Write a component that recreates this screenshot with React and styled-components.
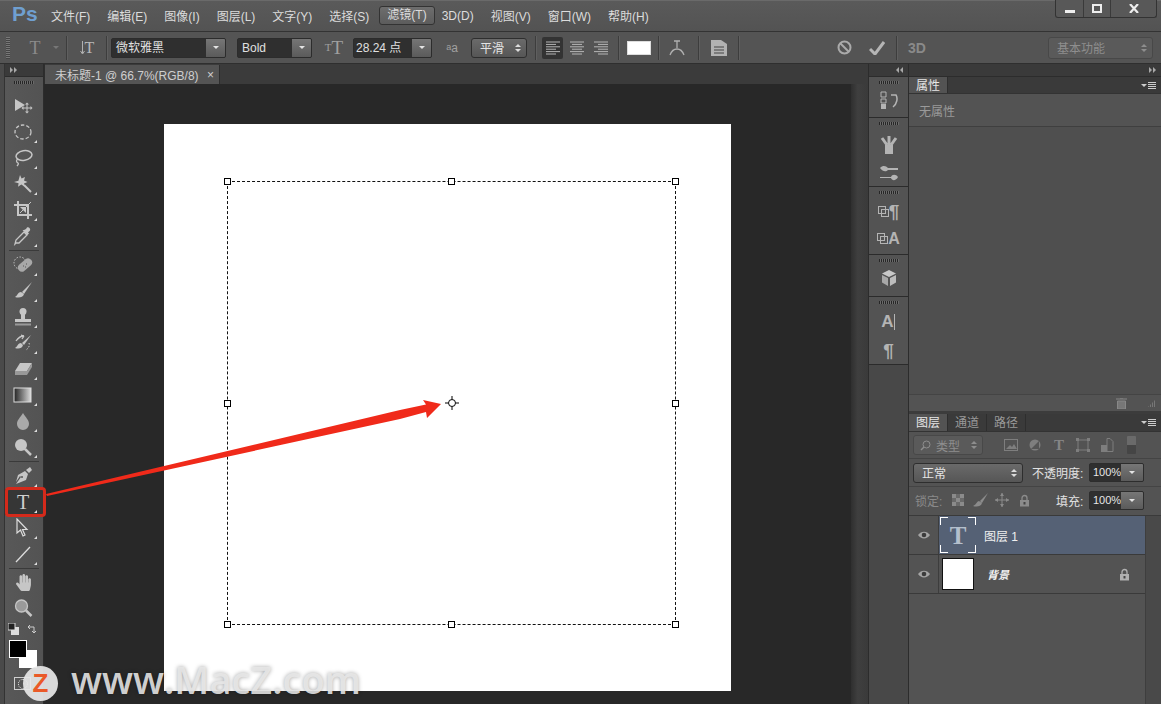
import React from 'react';
import styled, { createGlobalStyle } from 'styled-components';
import { FaHandPaper } from 'react-icons/fa';

const CN = `"Liberation Sans", "Noto Sans CJK SC", sans-serif`;

const GlobalStyle = createGlobalStyle`
  html, body { margin: 0; padding: 0; background: #535353; overflow: hidden; }
  body { font-family: ${CN}; font-size: 12px; color: #d0d0d0; }
  * { box-sizing: border-box; }
`;

const Root = styled.div`
  position: relative;
  width: 1161px;
  height: 704px;
  overflow: hidden;
  display: flex;
  flex-direction: column;
  background: #535353;
`;

/* menu bar */
const MenuBar = styled.div`
  height: 31px;
  display: flex;
  align-items: flex-start;
  padding-left: 12px;
  background: linear-gradient(#5a5a5a, #535353);
  border-top: 1px solid #6a6a6a;
`;

const Logo = styled.div`
  width: 39px;
  margin-top: 1px;
  font: bold 21px/24px "Liberation Sans", sans-serif;
  color: #6f9fd0;
`;

const Menu = styled.div`
  display: flex;
  gap: 17px;
  height: 29px;
  align-items: center;
`;

const MenuItem = styled.div`
  color: #dcdcdc;
  font-size: 12px;
  white-space: nowrap;
  ${p => p.$on && `
    margin: 0 -10px 0 -7px;
    padding: 0 7px;
    height: 19px;
    line-height: 17px;
    border: 1px solid #333;
    border-radius: 3px;
    background: linear-gradient(#6e6e6e, #5c5c5c);
  `}
`;

const WindowButtons = styled.div`
  margin-left: auto;
  margin-right: 4px;
  margin-top: -1px;
  width: 102px;
  height: 18px;
  display: grid;
  grid-template-columns: 27px 27px 1fr;
  border: 1px solid #333;
  border-top: 0;
  border-radius: 0 0 3px 3px;
  background: #585858;
`;

const WindowButton = styled.div`
  display: flex;
  align-items: center;
  justify-content: center;
  & + & { border-left: 1px solid #3a3a3a; }
`;

/* options bar */
const OptionsBar = styled.div`
  height: 33px;
  display: flex;
  align-items: center;
  background: #545454;
  border-top: 1px solid #333;
  border-bottom: 1px solid #2f2f2f;
`;

const Grip = styled.div`
  width: 4px;
  height: 22px;
  margin-left: 6px;
  background: repeating-linear-gradient(#777 0 1px, #444 1px 2px);
`;

const Sep = styled.div`
  width: 1px;
  height: 24px;
  margin-left: ${p => p.$ml || 0}px;
  background: #3d3d3d;
  box-shadow: 1px 0 0 #5f5f5f;
`;

const OptIcon = styled.div`
  display: flex;
  align-items: center;
  justify-content: center;
  width: ${p => p.$w || 20}px;
  height: 22px;
  margin-left: ${p => p.$ml || 0}px;
  font-family: "Liberation Serif", serif;
  color: #8d8d8d;
  background: ${p => (p.$on ? '#333' : 'transparent')};
  border-radius: 2px;
`;

const SerifT = styled.span`
  font: ${p => (p.$bold ? 'bold ' : '')}${p => p.$size || 18}px/1 "Liberation Serif", serif;
  color: ${p => p.$color || '#8a8a8a'};
`;

const Select = styled.div`
  display: flex;
  width: ${p => p.$w}px;
  height: 20px;
  margin-left: ${p => p.$ml || 0}px;
  border: 1px solid #2c2c2c;
  border-radius: 2px;
  background: #2f2f2f;
  overflow: hidden;
`;

const SelectText = styled.div`
  flex: 1;
  padding-left: ${p => p.$pad || 4}px;
  line-height: 18px;
  font-size: 12px;
  color: #e0e0e0;
  white-space: nowrap;
`;

const CaretBox = styled.div`
  width: ${p => p.$w || 19}px;
  display: flex;
  align-items: center;
  justify-content: center;
  background: linear-gradient(#767676, #5b5b5b);
  &::after {
    content: '';
    border-left: 3px solid transparent;
    border-right: 3px solid transparent;
    border-top: 3px solid #e4e4e4;
  }
`;

const Spinner = styled.div`
  display: flex;
  align-items: center;
  gap: 5px;
  width: ${p => p.$w}px;
  height: ${p => p.$h || 20}px;
  margin-left: ${p => p.$ml || 0}px;
  padding: 0 5px 0 ${p => p.$pad || 8}px;
  border: 1px solid ${p => (p.$dim ? '#484848' : '#2e2e2e')};
  border-radius: 3px;
  background: ${p => (p.$dim ? '#5a5a5a' : 'linear-gradient(#6a6a6a, #565656)')};
  color: ${p => (p.$dim ? '#8e8e8e' : '#e4e4e4')};
  font-size: 12px;
`;

const Arrows = styled.span`
  margin-left: auto;
  display: flex;
  flex-direction: column;
  gap: 2px;
  &::before, &::after {
    content: '';
    border-left: 3px solid transparent;
    border-right: 3px solid transparent;
  }
  &::before { border-bottom: 3px solid ${p => p.$c || '#ddd'}; }
  &::after { border-top: 3px solid ${p => p.$c || '#ddd'}; }
`;

const ColorChip = styled.div`
  width: 24px;
  height: 14px;
  margin-left: 8px;
  background: #fff;
  border: 1px solid #ddd;
`;

const Push = styled.div`
  margin-left: auto;
  margin-right: 8px;
`;

/* main */
const Main = styled.div`
  flex: 1;
  display: flex;
  min-height: 0;
`;

const Toolbar = styled.div`
  width: 44px;
  display: flex;
  flex-direction: column;
  background: #4a4a4a;
  padding-left: 4px;
  border-right: 1px solid #2c2c2c;
`;

const ToolColumn = styled.div`
  flex: 1;
  display: flex;
  flex-direction: column;
  background: linear-gradient(90deg, #585858, #535353);
  border-left: 1px solid #333;
`;

const CollapseBar = styled.div`
  height: 13px;
  display: flex;
  align-items: center;
  justify-content: ${p => p.$justify || 'flex-start'};
  padding: 0 5px;
  gap: 1px;
  background: #3a3a3a;
  border-bottom: 1px solid #2c2c2c;
`;

const DblArrow = styled.span`
  display: inline-block;
  width: 0;
  height: 0;
  border-top: 3px solid transparent;
  border-bottom: 3px solid transparent;
  ${p => (p.$left ? 'border-right: 3px solid #a8a8a8;' : 'border-left: 3px solid #a8a8a8;')}
`;

const GripRow = styled.div`
  height: ${p => p.$h || 16}px;
  display: flex;
  justify-content: center;
  padding-top: 4px;
  &::before {
    content: '';
    width: 20px;
    height: 3px;
    background: repeating-linear-gradient(90deg, #262626 0 1px, #6a6a6a 1px 2px);
  }
`;

const Tool = styled.div`
  position: relative;
  height: 26px;
  display: flex;
  align-items: center;
  justify-content: center;
  padding-right: 2px;
  background: ${p => (p.$on ? '#363636' : 'transparent')};
  &::after {
    content: '';
    display: ${p => (p.$corner ? 'block' : 'none')};
    position: absolute;
    right: 6px;
    bottom: 2px;
    border-left: 3px solid transparent;
    border-bottom: 3px solid #ddd;
  }
`;

const Divider = styled.div`
  height: ${p => (p.$thin ? 1 : 2)}px;
  margin: 1px 4px 0;
  border-top: 1px solid #3a3a3a;
`;

const ColorTools = styled.div`
  position: relative;
  flex: 1;
`;

const MiniRow = styled.div`
  display: flex;
  justify-content: space-between;
  padding: 2px 6px 0 3px;
`;

const Swatches = styled.div`
  position: relative;
  margin: 5px 0 0 4px;
  width: 28px;
  height: 30px;
`;

const Swatch = styled.div`
  position: absolute;
  left: ${p => p.$x}px;
  top: ${p => p.$y}px;
  width: 18px;
  height: 18px;
  background: ${p => p.$c};
  border: 1px solid #fff;
`;

const QuickMask = styled.div`
  margin: 7px 0 0 9px;
  width: 17px;
  height: 13px;
  border: 1px solid #cfcfcf;
  background: #555;
  display: flex;
  align-items: center;
  justify-content: center;
  &::after {
    content: '';
    width: 8px;
    height: 8px;
    border-radius: 50%;
    border: 1px dotted #eee;
  }
`;

/* document */
const DocArea = styled.div`
  width: 824px;
  display: flex;
  flex-direction: column;
`;

const TabStrip = styled.div`
  height: 20px;
  background: #3b3b3b;
  padding-top: 1px;
  border-left: 1px solid #2e2e2e;
`;

const DocTab = styled.div`
  width: 175px;
  height: 19px;
  display: flex;
  align-items: center;
  justify-content: space-between;
  padding: 0 5px 0 10px;
  background: #545454;
  color: #cfcfcf;
  font-size: 12px;
  border-right: 1px solid #2e2e2e;
`;

const Workspace = styled.div`
  flex: 1;
  display: flex;
  min-height: 0;
`;

const Pasteboard = styled.div`
  flex: 1;
  background: #282828;
  padding: 40px 0 0 120px;
`;

const VScroll = styled.div`
  width: 17px;
  background: linear-gradient(90deg, #2f2f2f, #3f3f3f 40%, #3a3a3a);
`;

const Canvas = styled.div`
  width: 567px;
  height: 567px;
  background: #fff;
  padding: 57px 0 0 63px;
`;

const TextBox = styled.div`
  position: relative;
  width: 449px;
  height: 444px;
  border: 1px dashed #111;
`;

const Handle = styled.div`
  position: absolute;
  left: calc(${p => p.$x}% + ${p => p.$x / 100}px);
  top: calc(${p => p.$y}% + ${p => p.$y / 100}px);
  width: 7px;
  height: 7px;
  margin: -4px 0 0 -4px;
  background: #fff;
  border: 1px solid #000;
`;

const Crosshair = styled.svg`
  position: absolute;
  left: 50%;
  top: 50%;
  margin: -7px 0 0 -7px;
`;

/* dock */
const Dock = styled.div`
  width: 41px;
  display: flex;
  flex-direction: column;
  background: #484848;
  border-left: 1px solid #2c2c2c;
  border-right: 1px solid #2c2c2c;
`;

const DockGroup = styled.div`
  height: ${p => p.$h}px;
  background: #535353;
  border-bottom: 1px solid #2b2b2b;
`;

const DockIcon = styled.div`
  height: ${p => p.$h || 27}px;
  display: flex;
  align-items: center;
  justify-content: center;
  color: #b4b4b4;
`;

const GlyphA = styled.span`
  font: ${p => (p.$light ? '' : 'bold ')}${p => p.$size || 15}px/1 "Liberation Sans", sans-serif;
  color: ${p => p.$color || '#b4b4b4'};
`;

/* panels */
const Panels = styled.div`
  flex: 1;
  display: flex;
  flex-direction: column;
  background: #3c3c3c;
`;

const PanelTabs = styled.div`
  height: ${p => p.$h || 17}px;
  display: flex;
  background: #3a3a3a;
  padding-left: ${p => p.$pad || 0}px;
  position: relative;
  border-bottom: 1px solid #333;
`;

const PanelTab = styled.div`
  width: ${p => p.$w || 39}px;
  text-align: center;
  line-height: 18px;
  font-size: 12px;
  color: ${p => (p.$on ? '#e6e6e6' : '#999')};
  background: ${p => (p.$on ? '#535353' : 'transparent')};
  border-right: 1px solid #2e2e2e;
`;

const PanelMenu = styled.div`
  margin-left: auto;
  margin-right: 5px;
  display: flex;
  align-items: center;
  gap: 1px;
  &::before {
    content: '';
    border-left: 3px solid transparent;
    border-right: 3px solid transparent;
    border-top: 3px solid #ccc;
  }
  &::after {
    content: '';
    width: 8px;
    height: 7px;
    background: repeating-linear-gradient(#ccc 0 1px, transparent 1px 2px);
  }
`;

const PropsPanel = styled.div`
  height: 334px;
  display: flex;
  flex-direction: column;
  background: #4f4f4f;
`;

const PropsHead = styled.div`
  height: 33px;
  padding: 8px 0 0 10px;
  background: #535353;
  color: #9a9a9a;
  font-size: 12px;
  border-bottom: 1px solid #3f3f3f;
`;

const PropsBody = styled.div`
  flex: 1;
`;

const PropsFooter = styled.div`
  height: 17px;
  display: flex;
  align-items: center;
  justify-content: flex-end;
  gap: 21px;
  padding-right: 5px;
  background: #535353;
  border-top: 1px solid #444;
`;

const ResizeGrip = styled.div`
  width: 8px;
  height: 8px;
  background: repeating-linear-gradient(90deg, #777 0 1px, transparent 1px 2px);
  clip-path: polygon(100% 0, 100% 100%, 0 100%);
`;

const LayersPanel = styled.div`
  margin-top: 3px;
  flex: 1;
  display: flex;
  flex-direction: column;
  background: #535353;
`;

const FilterRow = styled.div`
  height: 27px;
  display: flex;
  align-items: center;
  padding-left: 4px;
  border-bottom: 1px solid #444;
`;

const FilterIcons = styled.div`
  display: flex;
  margin-left: 16px;
`;

const IconCell = styled.div`
  width: ${p => p.$w || 24}px;
  display: flex;
  align-items: center;
  justify-content: center;
`;

const Toggle = styled.div`
  margin-left: 8px;
  width: 9px;
  height: 18px;
  border-radius: 1px;
  background: linear-gradient(#6a6a6a 50%, #454545 50%);
`;

const BlendRow = styled.div`
  height: 28px;
  display: flex;
  align-items: center;
  padding-left: 4px;
  border-bottom: 1px solid #444;
`;

const LockRow = styled.div`
  height: 29px;
  display: flex;
  align-items: center;
  padding: 0 0 2px 6px;
  border-bottom: 1px solid #3a3a3a;
`;

const FieldLabel = styled.div`
  width: ${p => p.$w}px;
  margin-left: ${p => p.$ml || 0}px;
  font-size: 12px;
  white-space: nowrap;
  color: ${p => (p.$dim ? '#8a8a8a' : '#e2e2e2')};
`;

const LockIcons = styled.div`
  display: flex;
`;

const Percent = styled.div`
  display: flex;
  width: 55px;
  height: 19px;
  margin-left: ${p => p.$ml || 0}px;
  border: 1px solid #2d2d2d;
  border-radius: 2px;
  background: #2f2f2f;
  overflow: hidden;
`;

const PercentText = styled.div`
  flex: 1;
  padding-left: 3px;
  line-height: 17px;
  font-size: 11px;
  color: #e6e6e6;
`;

const LayerArea = styled.div`
  flex: 1;
  display: flex;
`;

const LayerList = styled.div`
  flex: 1;
`;

const LayerScroll = styled.div`
  width: 16px;
  background: #494949;
  border-left: 1px solid #3e3e3e;
`;

const Layer = styled.div`
  height: 39px;
  display: flex;
  align-items: center;
  background: ${p => (p.$on ? '#556175' : 'transparent')};
  border-bottom: 1px solid #3a3a3a;
`;

const EyeCell = styled.div`
  width: 30px;
  height: 100%;
  display: flex;
  align-items: center;
  justify-content: center;
  background: #535353;
  border-right: 1px solid #3d3d3d;
`;

const TypeThumb = styled.div`
  position: relative;
  width: 36px;
  height: 36px;
  margin-left: 1px;
  display: flex;
  align-items: center;
  justify-content: center;
  background:
    linear-gradient(#fff, #fff) 0 0 / 8px 1px no-repeat,
    linear-gradient(#fff, #fff) 0 0 / 1px 8px no-repeat,
    linear-gradient(#fff, #fff) 100% 0 / 8px 1px no-repeat,
    linear-gradient(#fff, #fff) 100% 0 / 1px 8px no-repeat,
    linear-gradient(#fff, #fff) 0 100% / 8px 1px no-repeat,
    linear-gradient(#fff, #fff) 0 100% / 1px 8px no-repeat,
    linear-gradient(#fff, #fff) 100% 100% / 8px 1px no-repeat,
    linear-gradient(#fff, #fff) 100% 100% / 1px 8px no-repeat;
`;

const WhiteThumb = styled.div`
  width: 32px;
  height: 32px;
  margin-left: 3px;
  background: #fff;
  border: 1px solid #111;
`;

const LayerName = styled.div`
  margin-left: ${p => p.$ml}px;
  font-size: ${p => (p.$italic ? 11 : 12)}px;
  color: #f0f0f0;
  font-style: ${p => (p.$italic ? 'italic' : 'normal')};
  font-weight: ${p => (p.$italic ? 'bold' : 'normal')};
`;

const LayerLock = styled.div`
  margin-left: auto;
  margin-right: 15px;
  display: flex;
`;

/* things lying over the page */
const ArrowOverlay = styled.svg`
  position: absolute;
  left: 0;
  top: 0;
  pointer-events: none;
`;

const RedFrame = styled.div`
  position: absolute;
  left: 5px;
  top: 487px;
  width: 41px;
  height: 30px;
  border: 3px solid #d42a1b;
  border-radius: 4px;
`;

const Watermark = styled.div`
  position: absolute;
  left: 23px;
  top: 655px;
  display: flex;
  align-items: center;
  gap: 13px;
`;

const ZBadge = styled.div`
  width: 35px;
  height: 35px;
  margin-top: 9px;
  border-radius: 50%;
  background: rgba(232, 232, 232, 0.92);
  text-align: center;
  font: bold 26px/35px "Liberation Sans", sans-serif;
  color: #ea5a28;
`;

const MarkText = styled.div`
  font: 600 38px/48px "Open Sans", sans-serif;
  color: rgba(232, 232, 232, 0.9);
  text-shadow: 0 0 4px rgba(0, 0, 0, 0.35);
  white-space: nowrap;
`;

const G = '#c6c6c6';

const Ico = ({ s = 20, children }) => (
  <svg width={s} height={s} viewBox="0 0 20 20" fill={G}>{children}</svg>
);

const tools = {
  move: <Ico><path d="M2 3l10 6-10 6z" /><path d="M14 8v8M10 12h8" stroke={G} fill="none" /><path d="M14 6.5l2 2h-4zM14 17.5l2-2h-4zM8.5 12l2-2v4zM19.5 12l-2-2v4z" /></Ico>,
  marquee: <Ico><ellipse cx="10" cy="10" rx="8" ry="7" fill="none" stroke={G} strokeWidth="1.3" strokeDasharray="3.5 2" /></Ico>,
  lasso: <Ico><ellipse cx="11" cy="7.5" rx="8" ry="4.8" fill="none" stroke={G} strokeWidth="1.5" transform="rotate(-10 11 7.5)" /><path d="M5 11c-2 1-2 3 0 4 1 1 0 2-1 3" fill="none" stroke={G} strokeWidth="1.3" /></Ico>,
  wand: <Ico><path d="M7 1l1.6 3.6L12 3l-1 3.6 3.5 1.4-3.5 1.4.3 3-3-1.8L5 12.8l.6-3.6L1 8l4.4-1.2z" /><path d="M11 11l7 7" stroke={G} strokeWidth="2" /></Ico>,
  crop: <Ico><path d="M5 1v14h14M1 5h14v14" fill="none" stroke={G} strokeWidth="2" /><path d="M7 13L18 2" stroke={G} strokeWidth="1" /><path d="M7 7h6v6z" /></Ico>,
  dropper: <Ico><path d="M3 17l-1 1 1-4 8-8 3 3-8 8z" fill="none" stroke={G} strokeWidth="1.3" /><path d="M11 4l2-1 1-1.500c1-1 4 1 3 3l-2 2 1 1-1.500 1.500-5-5z" /></Ico>,
  heal: <Ico><circle cx="7" cy="8" r="6" fill="none" stroke={G} strokeDasharray="1.500 1.500" /><rect x="4" y="6" width="16" height="8" rx="4" transform="rotate(-40 12 10)" fill="#a8a8a8" /><path d="M10 11h1M13 9h1M12 12h1" stroke="#555" /></Ico>,
  brush: <Ico><path d="M19 1L9 11l2 2z" /><path d="M8 11c-3 0-3 3-6 5 3 1 8 1 9-3z" /></Ico>,
  stamp: <Ico><circle cx="10" cy="4.500" r="3.500" /><rect x="8" y="6" width="4" height="7" /><rect x="2" y="12" width="16" height="3" /><rect x="2" y="16.500" width="16" height="2" fill="#999" /></Ico>,
  history: <Ico><path d="M18 2L9 10l2 2z" /><path d="M8 10c-3 0-3 3-6 5 3 1 7 1 8-3z" /><path d="M3 8c2-3 5-5 8-5M11 3L8 2M11 3L9 6" fill="none" stroke={G} strokeWidth="1.300" /><path d="M16 10c1 2 0 5-3 7" fill="none" stroke={G} strokeDasharray="1.500 1.500" /></Ico>,
  eraser: <Ico><path d="M7 4h12l-5 8H2z" /><path d="M2 12h12v4H2zM14 12l5-8v4l-5 8z" fill="#999" /></Ico>,
  gradient: <svg width="20" height="18"><defs><linearGradient id="gr"><stop offset="0" stopColor="#222" /><stop offset="1" stopColor="#ddd" /></linearGradient></defs><rect x="1" y="2" width="17" height="14" fill="url(#gr)" stroke="#ddd" /></svg>,
  drop: <Ico><path d="M10 2c3 5 6 7 6 11a6 6 0 0 1-12 0c0-4 3-6 6-11z" fill="#aaa" /></Ico>,
  dodge: <Ico><circle cx="8" cy="8" r="6" /><path d="M12 12l6 6" stroke={G} strokeWidth="2.500" /></Ico>,
  pen: <Ico><path d="M17 1l2 3-3 3-3-3z" /><path d="M12 5l3 3-2 6-10 4 5-7-1-1-4 6 2-7z" /><circle cx="9" cy="11" r="1" fill="#555" /></Ico>,
  select: <Ico><path d="M4 1v14l3.500-3 2.500 6 2-1-2.500-5.500H14z" fill="none" stroke="#ddd" strokeWidth="1.200" /></Ico>,
  line: <Ico><path d="M3 18L17 3" stroke="#ddd" strokeWidth="1.300" /></Ico>,
  zoom: <Ico><circle cx="8.500" cy="8" r="6" fill="#9a9a9a" stroke={G} strokeWidth="1.300" /><path d="M13 12.500l5.500 5.500" stroke={G} strokeWidth="2.500" /></Ico>,
};

const Eye = () => (
  <svg width="14" height="10" viewBox="0 0 14 10">
    <path d="M1 5c3-4.500 9-4.500 12 0-3 4.500-9 4.500-12 0z" fill="#a5a5a5" />
    <circle cx="7" cy="5" r="2.300" fill="#3c3c3c" />
  </svg>
);

const LockGlyph = ({ c = '#b0b0b0' }) => (
  <svg width="11" height="13" viewBox="0 0 11 13">
    <path d="M3 6V4a2.500 2.500 0 0 1 5 0v2" fill="none" stroke={c} strokeWidth="1.300" />
    <rect x="1" y="6" width="9" height="6.500" fill={c} />
    <rect x="4.500" y="8" width="2" height="2.500" fill="#444" />
  </svg>
);

const StackedSquares = () => (
  <svg width="11" height="11">
    <rect x="0.500" y="0.500" width="7" height="7" fill="none" stroke="#b4b4b4" />
    <rect x="3.500" y="3.500" width="7" height="7" fill="none" stroke="#b4b4b4" />
  </svg>
);

const AlignLines = ({ kind }) => {
  const rows = [[0, 14], [2, 10], [0, 14], [2, 10], [0, 14], [2, 10]];
  return (
    <svg width="14" height="14">
      {rows.map(([inset, w], i) => {
        const x = kind === 'left' ? 0 : kind === 'right' ? 14 - w : inset;
        return <rect key={i} x={x} y={i * 2.4 + 0.5} width={w} height="1" fill="#b5b5b5" />;
      })}
    </svg>
  );
};

const HANDLES = [[0, 0], [50, 0], [100, 0], [0, 50], [100, 50], [0, 100], [50, 100], [100, 100]];

const groups = [
  ['move', 'marquee', 'lasso', 'wand', 'crop', 'dropper'],
  ['heal', 'brush', 'stamp', 'history', 'eraser', 'gradient', 'drop', 'dodge'],
  ['pen', 'type', 'select', 'line'],
];

const renderTool = name => {
  if (name === 'type') {
    return <Tool key={name} $on $corner><SerifT $size={20} $color="#cfcfcf">T</SerifT></Tool>;
  }
  return <Tool key={name} $corner={name !== 'move'}>{tools[name]}</Tool>;
};

const App = () => (
  <Root>
    <GlobalStyle />
    <MenuBar>
      <Logo>Ps</Logo>
      <Menu>
        <MenuItem>文件(F)</MenuItem>
        <MenuItem>编辑(E)</MenuItem>
        <MenuItem>图像(I)</MenuItem>
        <MenuItem>图层(L)</MenuItem>
        <MenuItem>文字(Y)</MenuItem>
        <MenuItem>选择(S)</MenuItem>
        <MenuItem $on>滤镜(T)</MenuItem>
        <MenuItem>3D(D)</MenuItem>
        <MenuItem>视图(V)</MenuItem>
        <MenuItem>窗口(W)</MenuItem>
        <MenuItem>帮助(H)</MenuItem>
      </Menu>
      <WindowButtons>
        <WindowButton><svg width="10" height="10"><rect y="6" width="10" height="3" fill="#eee" /></svg></WindowButton>
        <WindowButton><svg width="10" height="9"><rect x="1" y="1" width="8" height="7" fill="none" stroke="#eee" strokeWidth="2" /></svg></WindowButton>
        <WindowButton><svg width="10" height="9"><path d="M1 0l8 9M9 0l-8 9" stroke="#eee" strokeWidth="2.200" /></svg></WindowButton>
      </WindowButtons>
    </MenuBar>

    <OptionsBar>
      <Grip />
      <OptIcon $w={18} $ml={16}><SerifT $size={18}>T</SerifT></OptIcon>
      <OptIcon $w={12} $ml={6}><svg width="6" height="4"><path d="M0 0h6L3 3z" fill="#777" /></svg></OptIcon>
      <Sep $ml={4} />
      <OptIcon $ml={10}>
        <svg width="5" height="14"><path d="M2.500 0v12M.5 10l2 3 2-3" fill="none" stroke="#b0b0b0" /></svg>
        <SerifT $size={16} $color="#b8b8b8">T</SerifT>
      </OptIcon>
      <Sep $ml={9} />
      <Select $w={115} $ml={4}><SelectText>微软雅黑</SelectText><CaretBox /></Select>
      <Select $w={75} $ml={11}><SelectText>Bold</SelectText><CaretBox /></Select>
      <OptIcon $ml={12}><SerifT $size={11} $color="#a0a0a0">T</SerifT><SerifT $size={19} $color="#a0a0a0">T</SerifT></OptIcon>
      <Select $w={79} $ml={9}><SelectText $pad={2}>28.24 点</SelectText><CaretBox /></Select>
      <OptIcon $ml={10}><GlyphA $light $size={9} $color="#a0a0a0">a</GlyphA><GlyphA $light $size={12} $color="#a0a0a0">a</GlyphA></OptIcon>
      <Spinner $w={56} $ml={9}>平滑<Arrows /></Spinner>
      <Sep $ml={8} />
      <OptIcon $on $w={21} $ml={6}><AlignLines kind="left" /></OptIcon>
      <OptIcon $w={24} $ml={2}><AlignLines kind="center" /></OptIcon>
      <OptIcon $w={24}><AlignLines kind="right" /></OptIcon>
      <Sep $ml={5} />
      <ColorChip />
      <Sep $ml={7} />
      <OptIcon $ml={8} $w={20}><svg width="16" height="18" viewBox="0 0 16 18"><path d="M5 2h6M8 2v7M1 16c3-8 11-8 14 0" fill="none" stroke="#b0b0b0" strokeWidth="1.300" /></svg></OptIcon>
      <Sep $ml={11} />
      <OptIcon $ml={10} $w={20}><svg width="16" height="16"><path d="M0 0h10l6 4v12H0z" fill="#b2b2b2" /><path d="M3 7h10M3 10h10M3 13h10" stroke="#444" /></svg></OptIcon>
      <Sep $ml={9} />
      <OptIcon $ml={96} $w={18}><svg width="15" height="15"><circle cx="7.500" cy="7.500" r="6" fill="none" stroke="#aaa" strokeWidth="2" /><path d="M3.500 3.500l8 8" stroke="#aaa" strokeWidth="2" /></svg></OptIcon>
      <OptIcon $ml={15} $w={18}><svg width="16" height="14"><path d="M1 8l5 5 9-12" fill="none" stroke="#b5b5b5" strokeWidth="3" /></svg></OptIcon>
      <Sep $ml={10} />
      <OptIcon $ml={11} $w={18}><GlyphA $size={14} $color="#8a8a8a">3D</GlyphA></OptIcon>
      <Push>
        <Spinner $dim $w={105} $h={22}>基本功能<Arrows $c="#8e8e8e" /></Spinner>
      </Push>
    </OptionsBar>

    <Main>
      <Toolbar>
        <ToolColumn>
          <CollapseBar><DblArrow /><DblArrow /></CollapseBar>
          <GripRow />
          {groups.map((g, i) => (
            <React.Fragment key={i}>
              {g.map(renderTool)}
              <Divider $thin={i === 2} />
            </React.Fragment>
          ))}
          <Tool><FaHandPaper size={17} color={G} /></Tool>
          <Tool>{tools.zoom}</Tool>
          <ColorTools>
            <MiniRow>
              <svg width="11" height="12"><rect x="3" y="4" width="8" height="8" fill="#ddd" /><rect x="0" y="0" width="7" height="7" fill="#222" stroke="#ddd" /></svg>
              <svg width="11" height="12" viewBox="0 0 11 12"><path d="M2 4h6v6M2 4l2-2M2 4l2 2M8 10l-2-2M8 10l2-2" fill="none" stroke="#ccc" /></svg>
            </MiniRow>
            <Swatches>
              <Swatch $x={10} $y={10} $c="#fff" />
              <Swatch $x={0} $y={0} $c="#000" />
            </Swatches>
            <QuickMask />
          </ColorTools>
        </ToolColumn>
      </Toolbar>

      <DocArea>
        <TabStrip>
          <DocTab>未标题-1 @ 66.7%(RGB/8)<span>×</span></DocTab>
        </TabStrip>
        <Workspace>
          <Pasteboard>
            <Canvas>
              <TextBox>
                {HANDLES.map(([x, y]) => <Handle key={`${x}-${y}`} $x={x} $y={y} />)}
                <Crosshair width="14" height="14" viewBox="0 0 14 14">
                  <circle cx="7" cy="7" r="3.500" fill="none" stroke="#000" />
                  <path d="M7 0v3M7 11v3M0 7h3M11 7h3" stroke="#000" />
                </Crosshair>
              </TextBox>
            </Canvas>
          </Pasteboard>
          <VScroll />
        </Workspace>
      </DocArea>

      <Dock>
        <CollapseBar $justify="flex-end"><DblArrow $left /><DblArrow $left /></CollapseBar>
        <DockGroup $h={41}>
          <GripRow $h={9} />
          <DockIcon><svg width="18" height="18"><path d="M1 1h5v5H1zM1 8h5v4H1z" fill="none" stroke="#b4b4b4" /><rect x="1" y="13" width="5" height="5" fill="#b4b4b4" /><path d="M11 4h5c2 3 1 9-3 12" fill="none" stroke="#b4b4b4" strokeWidth="1.500" /></svg></DockIcon>
        </DockGroup>
        <DockGroup $h={69}>
          <GripRow $h={9} />
          <DockIcon $h={33}><svg width="20" height="22"><rect x="6" y="12" width="8" height="9" fill="#b4b4b4" /><path d="M8 12L3 5M10 12V3M12 12l5-7" stroke="#b4b4b4" strokeWidth="3" /></svg></DockIcon>
          <DockIcon $h={25}><svg width="20" height="18"><path d="M1 4c3-3 6-2 8 0h10v2H9C7 8 4 8 1 4zM1 13h11c1-3 5-3 7 0-2 4-6 4-7 1H1z" fill="#b4b4b4" /></svg></DockIcon>
        </DockGroup>
        <DockGroup $h={68}>
          <GripRow $h={9} />
          <DockIcon $h={30}><StackedSquares /><GlyphA $size={19}>¶</GlyphA></DockIcon>
          <DockIcon $h={25}><StackedSquares /><GlyphA $size={16}>A</GlyphA></DockIcon>
        </DockGroup>
        <DockGroup $h={42}>
          <GripRow $h={9} />
          <DockIcon><svg width="16" height="18" viewBox="0 0 16 18"><path d="M8 1l7 3.500-7 3.500-7-3.500z" fill="#c8c8c8" /><path d="M1 6l6 3v8l-6-3.500z" fill="#a8a8a8" /><path d="M15 6L9 9v8l6-3.500z" fill="#bcbcbc" /></svg></DockIcon>
        </DockGroup>
        <DockGroup $h={68}>
          <GripRow $h={9} />
          <DockIcon $h={31}><GlyphA $size={17}>A</GlyphA><svg width="2" height="16"><rect width="1" height="16" fill="#b4b4b4" /></svg></DockIcon>
          <DockIcon $h={27}><GlyphA $size={19}>¶</GlyphA></DockIcon>
        </DockGroup>
      </Dock>

      <Panels>
        <CollapseBar $justify="flex-end"><DblArrow /><DblArrow /></CollapseBar>
        <PropsPanel>
          <PanelTabs $pad={0}>
            <PanelTab $on $w={39}>属性</PanelTab>
            <PanelMenu />
          </PanelTabs>
          <PropsHead>无属性</PropsHead>
          <PropsBody />
          <PropsFooter>
            <svg width="11" height="11"><path d="M0 1h11M4 0h3M1.500 3h8v8h-8z" stroke="#888" fill="#777" /></svg>
            <ResizeGrip />
          </PropsFooter>
        </PropsPanel>
        <LayersPanel>
          <PanelTabs $h={18}>
            <PanelTab $on>图层</PanelTab>
            <PanelTab>通道</PanelTab>
            <PanelTab>路径</PanelTab>
            <PanelMenu />
          </PanelTabs>
          <FilterRow>
            <Spinner $dim $w={70} $pad={6}>
              <svg width="11" height="11"><circle cx="6.500" cy="4.500" r="3.500" fill="none" stroke="#8e8e8e" /><path d="M4 7L1 10" stroke="#8e8e8e" strokeWidth="1.500" /></svg>
              类型<Arrows $c="#8e8e8e" />
            </Spinner>
            <FilterIcons>
              <IconCell><svg width="14" height="14"><rect x="0.500" y="1.500" width="13" height="11" fill="none" stroke="#7e7e7e" /><path d="M2 11l4-4 2 2 2-3 3 5z" fill="#7e7e7e" /></svg></IconCell>
              <IconCell><svg width="12" height="12"><circle cx="6" cy="6" r="5.500" fill="#7e7e7e" /><path d="M2 10l8-8v8z" fill="#555" /></svg></IconCell>
              <IconCell><SerifT $size={15} $bold $color="#858585">T</SerifT></IconCell>
              <IconCell><svg width="14" height="14"><rect x="2" y="2" width="10" height="10" fill="none" stroke="#7e7e7e" /><path d="M0 0h3v3H0zM11 0h3v3h-3zM0 11h3v3H0zM11 11h3v3h-3z" fill="#7e7e7e" /></svg></IconCell>
              <IconCell><svg width="14" height="14"><path d="M7 .5h3l3 3v10H7z" fill="none" stroke="#7e7e7e" /><rect x="1" y="7" width="6" height="7" fill="#7e7e7e" /></svg></IconCell>
            </FilterIcons>
            <Toggle />
          </FilterRow>
          <BlendRow>
            <Spinner $w={110} $pad={8}>正常<Arrows /></Spinner>
            <FieldLabel $w={57} $ml={9}>不透明度:</FieldLabel>
            <Percent><PercentText>100%</PercentText><CaretBox $w={24} /></Percent>
          </BlendRow>
          <LockRow>
            <FieldLabel $dim $w={32}>锁定:</FieldLabel>
            <LockIcons>
              <IconCell $w={22}><svg width="12" height="12"><path d="M0 0h4v4H0zM8 0h4v4H8zM4 4h4v4H4zM0 8h4v4H0zM8 8h4v4H8z" fill="#8b8b8b" /><path d="M4 0h4v4H4zM0 4h4v4H0zM8 4h4v4H8zM4 8h4v4H4z" fill="#6a6a6a" /></svg></IconCell>
              <IconCell $w={22}><svg width="16" height="14"><path d="M16 0L8 8l2 2zM7 8c-2 0-2 3-6 5 3 1 8 1 9-3z" fill="#8b8b8b" /></svg></IconCell>
              <IconCell $w={22}><svg width="14" height="14"><path d="M7 0v14M0 7h14" stroke="#8b8b8b" /><path d="M7 0l2 3H5zM7 14l2-3H5zM0 7l3-2v4zM14 7l-3-2v4z" fill="#8b8b8b" /></svg></IconCell>
              <IconCell $w={22}><LockGlyph c="#8b8b8b" /></IconCell>
            </LockIcons>
            <FieldLabel $w={30} $ml={21}>填充:</FieldLabel>
            <Percent $ml={3}><PercentText>100%</PercentText><CaretBox $w={24} /></Percent>
          </LockRow>
          <LayerArea>
            <LayerList>
              <Layer $on>
                <EyeCell><Eye /></EyeCell>
                <TypeThumb><SerifT $size={25} $bold $color="#b4bfcc">T</SerifT></TypeThumb>
                <LayerName $ml={8}>图层 1</LayerName>
              </Layer>
              <Layer>
                <EyeCell><Eye /></EyeCell>
                <WhiteThumb />
                <LayerName $italic $ml={13}>背景</LayerName>
                <LayerLock><LockGlyph /></LayerLock>
              </Layer>
            </LayerList>
            <LayerScroll />
          </LayerArea>
        </LayersPanel>
      </Panels>
    </Main>

    <ArrowOverlay width="1161" height="704" viewBox="0 0 1161 704">
      <path d="M46 494L400 410l26-5.500-3-4.500 18 4-14 14-1-6-26 7L47 496z" fill="#f02a1a" />
    </ArrowOverlay>
    <RedFrame />
    <Watermark>
      <ZBadge>Z</ZBadge>
      <MarkText>www.MacZ.com</MarkText>
    </Watermark>
  </Root>
);

export default App;
